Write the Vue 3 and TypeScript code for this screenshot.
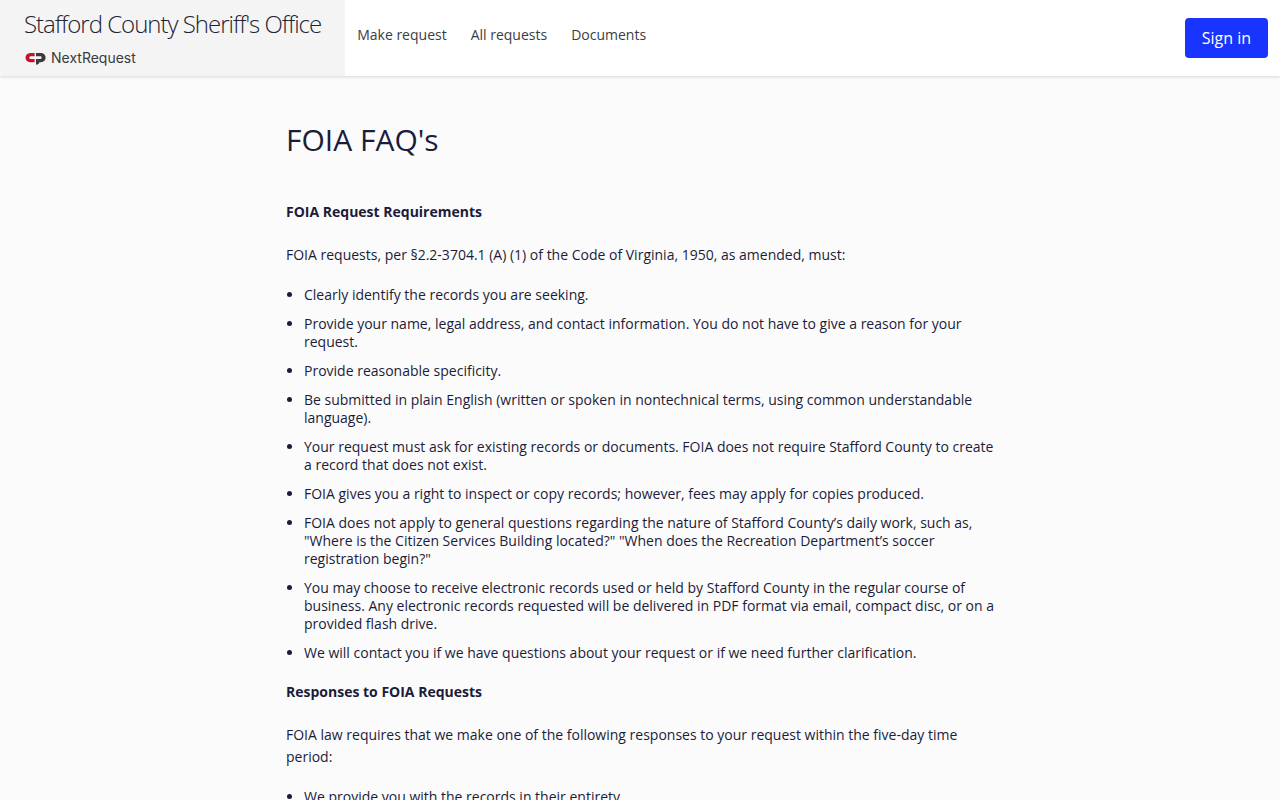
<script setup lang="ts">
interface Section {
  title: string
  intro: string
  items: string[]
}

const links: string[] = ['Make request', 'All requests', 'Documents']

const sections: Section[] = [
  {
    title: 'FOIA Request Requirements',
    intro: 'FOIA requests, per §2.2-3704.1 (A) (1) of the Code of Virginia, 1950, as amended, must:',
    items: [
      'Clearly identify the records you are seeking.',
      'Provide your name, legal address, and contact information. You do not have to give a reason for your request.',
      'Provide reasonable specificity.',
      'Be submitted in plain English (written or spoken in nontechnical terms, using common understandable language).',
      'Your request must ask for existing records or documents. FOIA does not require Stafford County to create a record that does not exist.',
      'FOIA gives you a right to inspect or copy records; however, fees may apply for copies produced.',
      'FOIA does not apply to general questions regarding the nature of Stafford County’s daily work, such as, "Where is the Citizen Services Building located?" "When does the Recreation Department’s soccer registration begin?"',
      'You may choose to receive electronic records used or held by Stafford County in the regular course of business. Any electronic records requested will be delivered in PDF format via email, compact disc, or on a provided flash drive.',
      'We will contact you if we have questions about your request or if we need further clarification.',
    ],
  },
  {
    title: 'Responses to FOIA Requests',
    intro: 'FOIA law requires that we make one of the following responses to your request within the five-day time period:',
    items: ['We provide you with the records in their entirety.'],
  },
]
</script>

<template>
  <header class="topbar">
    <a class="brand" href="#">
      <span class="brand-name">Stafford County Sheriff's Office</span>
      <span class="product">
        <svg class="mark" viewBox="0 0 22 14" aria-hidden="true">
          <path fill="#c8102e" d="M6.2 2H10.6V5.2H6.6C4.9 5.2 4.9 8 6.6 8H10.6V11.2H6.2C0 11.2 0 2 6.2 2Z" />
          <path fill="#3a3a3c" d="M12 2H16.8C23.2 2 23.2 11.2 16.8 11.2H15.4C15.2 12.8 14 13.6 12 13.8V8H16.4C18.1 8 18.1 5.2 16.4 5.2H12Z" />
        </svg>
        <span>NextRequest</span>
      </span>
    </a>
    <nav class="links" aria-label="Main">
      <a v-for="link in links" :key="link" href="#">{{ link }}</a>
    </nav>
    <button class="sign-in" type="button">Sign in</button>
  </header>

  <main class="content">
    <h1>FOIA FAQ's</h1>
    <section v-for="section in sections" :key="section.title">
      <h2>{{ section.title }}</h2>
      <p>{{ section.intro }}</p>
      <ul>
        <li v-for="item in section.items" :key="item">{{ item }}</li>
      </ul>
    </section>
  </main>
</template>

<style>
body {
  margin: 0;
  background: #fbfbfb;
}
</style>

<style scoped>
.topbar {
  display: flex;
  align-items: stretch;
  min-height: 76px;
  background: #fff;
  box-shadow: 0 1px 3px rgba(0, 0, 0, 0.15);
  font-family: "Open Sans", sans-serif;
}

.brand {
  display: flex;
  flex-direction: column;
  gap: 8px;
  padding: 8px 24px 0;
  background: #f4f4f4;
  color: #1d2333;
  text-decoration: none;
}

.brand-name {
  font-size: 24px;
  font-weight: 300;
  line-height: 32px;
  letter-spacing: -1px;
}

.product {
  display: flex;
  align-items: center;
  gap: 5px;
  color: #3a3a3c;
  font: 14px/20px Inter, sans-serif;
}

.mark {
  width: 22px;
  height: 14px;
}

.links {
  display: flex;
  flex: 1;
  align-items: flex-start;
  gap: 24px;
  padding: 24px 12px;
}

.links a {
  color: #3c3c44;
  font-size: 14px;
  line-height: 22px;
  text-decoration: none;
}

.sign-in {
  align-self: center;
  height: 40px;
  margin-right: 12px;
  padding: 0 17px;
  border: 0;
  border-radius: 4px;
  background: #1a34ff;
  color: #fff;
  font: 16px/24px "Open Sans", sans-serif;
}

.content {
  max-width: 710px;
  margin: 0 auto;
  padding: 44px 24px 24px 26px;
  color: #1b1b3a;
  font: 14px/22px "Open Sans", sans-serif;
}

h1 {
  margin: 0 0 41px;
  font-size: 30px;
  font-weight: 400;
  line-height: 40px;
}

h2 {
  margin: 0 0 21px;
  font-size: 14px;
  font-weight: 700;
  line-height: 22px;
}

p {
  margin: 0 0 20px;
}

ul {
  display: flex;
  flex-direction: column;
  gap: 11px;
  margin: 0 0 19px;
  padding-left: 18px;
  line-height: 18px;
}
</style>
